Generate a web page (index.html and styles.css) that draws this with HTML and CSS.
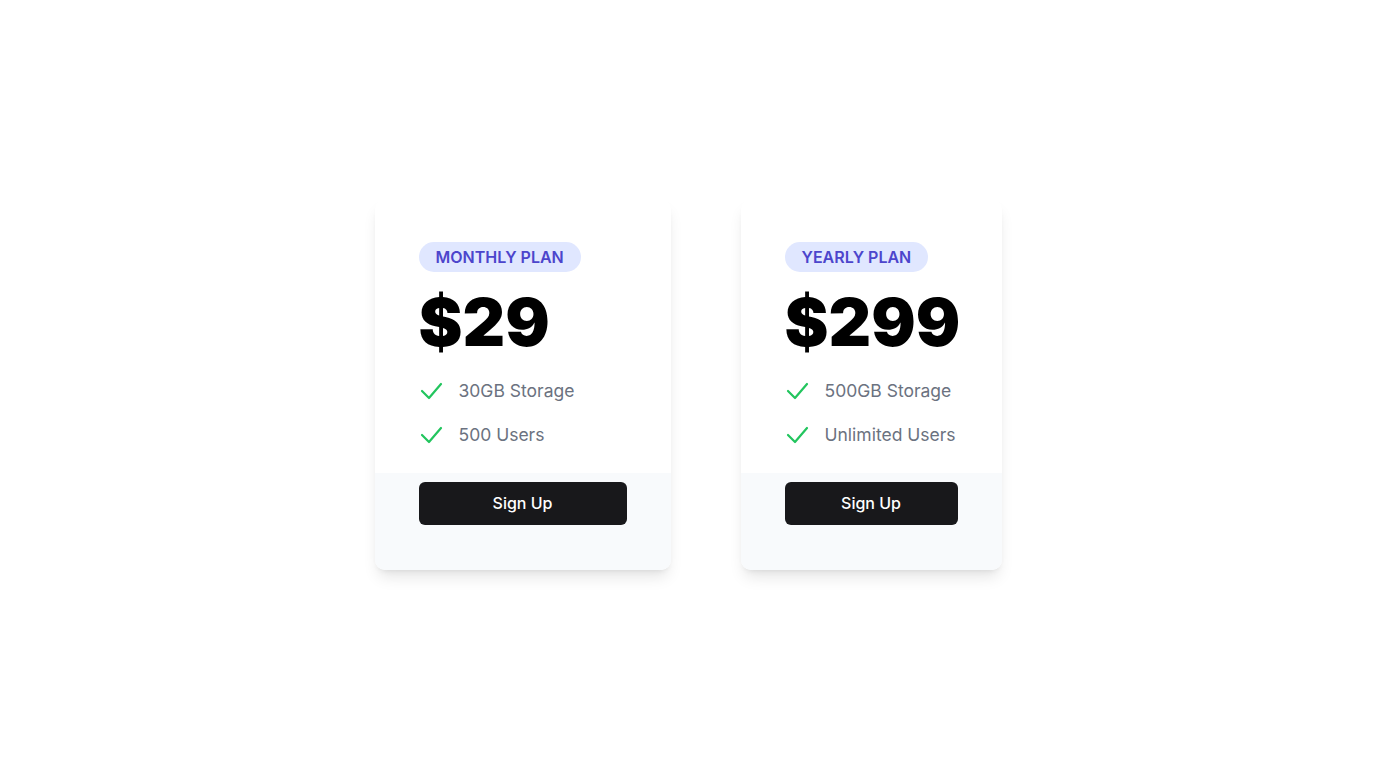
FILE: index.html
```html
<!DOCTYPE html>
<html>
<head>
  <title>Pricing</title>
  <meta name="viewport" content="width=device-width, initial-scale=1.0">
  <link rel="stylesheet" href="styles.css">
</head>
<body>
  <div class="plans">
    <div class="card card-monthly">
      <div class="card-body">
        <span class="badge">Monthly Plan</span>
        <div class="price">$29</div>
        <ul class="features">
          <li>
            <svg class="check" viewBox="0 0 24 24"><path d="M3 12l7 7 12-14"/></svg>
            <span>30GB Storage</span>
          </li>
          <li>
            <svg class="check" viewBox="0 0 24 24"><path d="M3 12l7 7 12-14"/></svg>
            <span>500 Users</span>
          </li>
        </ul>
      </div>
      <div class="card-footer">
        <button class="signup-btn">Sign Up</button>
      </div>
    </div>

    <div class="card card-yearly">
      <div class="card-body">
        <span class="badge">Yearly Plan</span>
        <div class="price">$299</div>
        <ul class="features">
          <li>
            <svg class="check" viewBox="0 0 24 24"><path d="M3 12l7 7 12-14"/></svg>
            <span>500GB Storage</span>
          </li>
          <li>
            <svg class="check" viewBox="0 0 24 24"><path d="M3 12l7 7 12-14"/></svg>
            <span>Unlimited Users</span>
          </li>
        </ul>
      </div>
      <div class="card-footer">
        <button class="signup-btn">Sign Up</button>
      </div>
    </div>
  </div>
</body>
</html>
```

FILE: styles.css
```css
body {
  margin: 0;
  padding: 0;
  font-family: Inter, "Noto Sans", sans-serif;
  background-color: #ffffff;
  color: #111827;
}

.plans {
  min-height: 100vh;
  display: flex;
  justify-content: center;
  align-items: center;
  gap: 70px;
}

.card {
  background-color: #ffffff;
  border-radius: 10px;
  overflow: hidden;
  box-shadow: 0 10px 15px -3px rgba(0, 0, 0, 0.1), 0 4px 6px -4px rgba(0, 0, 0, 0.1);
}

.card-monthly {
  width: 296px;
}

.card-yearly {
  width: 261px;
}

.card-body {
  padding: 43px 44px 24px;
}

.badge {
  display: inline-block;
  height: 30px;
  line-height: 30px;
  padding: 0 17px;
  border-radius: 15px;
  background-color: #e0e7ff;
  color: #4c45cc;
  font-size: 16px;
  font-weight: 600;
  text-transform: uppercase;
}

.price {
  margin-top: 15px;
  font-size: 66px;
  line-height: 70px;
  font-weight: 900;
  color: #000000;
}

.features {
  list-style: none;
  margin: 20px 0 0;
  padding: 0;
  display: flex;
  flex-direction: column;
  gap: 16px;
}

.features li {
  display: flex;
  align-items: center;
  gap: 16px;
  height: 28px;
  font-size: 17.5px;
  color: #6b7280;
  white-space: nowrap;
}

.check {
  flex-shrink: 0;
  width: 24px;
  height: 24px;
  fill: none;
  stroke: #22c55e;
  stroke-width: 2.2;
  stroke-linecap: round;
  stroke-linejoin: round;
}

.card-footer {
  background-color: #f8fafc;
  padding: 9px 44px 45px;
}

.signup-btn {
  display: block;
  width: 100%;
  height: 43px;
  border: none;
  border-radius: 6px;
  background-color: #18181b;
  color: #ffffff;
  font-family: Inter, "Noto Sans", sans-serif;
  font-size: 16px;
  font-weight: 500;
  cursor: pointer;
}
```
